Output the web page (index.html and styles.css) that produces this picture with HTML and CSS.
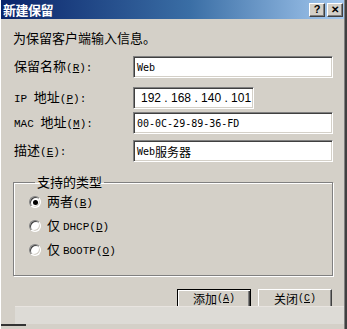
FILE: index.html
```html
<!DOCTYPE html>
<html lang="zh-CN">
<head>
    <meta charset="UTF-8">
    <title>新建保留</title>
    <link rel="stylesheet" href="styles.css">
</head>
<body>
    <div class="window">
        <div class="titlebar">
            <span class="title">新建保留</span>
            <div class="caption-buttons">
                <span class="cap-btn">?</span>
                <span class="cap-btn cap-close">&#x2715;</span>
            </div>
        </div>

        <div class="content">
            <p class="intro">为保留客户端输入信息。</p>

            <div class="form">
                <label class="field-label">保留名称<span class="a">(<u>R</u>):</span></label>
                <div class="input"><span class="mono">Web</span></div>

                <label class="field-label row-ip"><span class="a">IP </span>地址<span class="a">(<u>P</u>):</span></label>
                <div class="input input-ip row-ip"><span class="ip">192 . 168 . 140 . 101</span></div>

                <label class="field-label"><span class="a">MAC </span>地址<span class="a">(<u>M</u>):</span></label>
                <div class="input"><span class="mono">00-0C-29-89-36-FD</span></div>

                <label class="field-label">描述<span class="a">(<u>E</u>):</span></label>
                <div class="input"><span class="mono">Web</span>服务器</div>
            </div>

            <fieldset class="group">
                <legend>支持的类型</legend>
                <div class="option">
                    <span class="radio checked"></span>
                    <span>两者<span class="a">(<u>B</u>)</span></span>
                </div>
                <div class="option">
                    <span class="radio"></span>
                    <span>仅 <span class="a">DHCP(<u>D</u>)</span></span>
                </div>
                <div class="option">
                    <span class="radio"></span>
                    <span>仅 <span class="a">BOOTP(<u>O</u>)</span></span>
                </div>
            </fieldset>

            <div class="actions">
                <button class="btn btn-default">添加<span class="a">(<u>A</u>)</span></button>
                <button class="btn">关闭<span class="a">(<u>C</u>)</span></button>
            </div>
        </div>

        <div class="strip"></div>
        <div class="edge"></div>
    </div>
</body>
</html>
```

FILE: styles.css
```css
* {
    margin: 0;
    padding: 0;
    box-sizing: border-box;
}

body {
    width: 347px;
    height: 329px;
    overflow: hidden;
    background: #404040;
    font-family: 'Noto Sans CJK SC', sans-serif;
    font-size: 13px;
    color: #000;
}

.window {
    width: 345px;
    height: 329px;
    background: #d4d0c8;
    border-left: 1px solid #fff;
    border-right: 1px solid #808080;
    overflow: hidden;
}

.titlebar {
    height: 19px;
    display: flex;
    align-items: center;
    justify-content: space-between;
    padding: 0 1px 0 2px;
    background: linear-gradient(90deg, #0a246a 0%, #3a6ea5 55%, #a6caf0 100%);
}

.title {
    color: #fff;
    font-weight: 700;
    font-size: 13px;
    line-height: 19px;
    letter-spacing: -0.5px;
}

.caption-buttons {
    display: flex;
    gap: 2px;
}

.cap-btn {
    width: 16px;
    height: 14px;
    display: flex;
    align-items: center;
    justify-content: center;
    background: #d4d0c8;
    border: 1px solid;
    border-color: #fff #404040 #404040 #fff;
    box-shadow: inset -1px -1px #808080;
    font-family: 'Liberation Sans', sans-serif;
    font-weight: 700;
    font-size: 11px;
    line-height: 1;
}

.cap-close {
    font-size: 10px;
}

.content {
    padding: 0 12px 0 11px;
}

.intro {
    margin-top: 12px;
    line-height: 14px;
    padding-left: 1px;
}

.a {
    font-family: 'Liberation Mono', monospace;
    font-size: 11px;
}

.form {
    margin-top: 11px;
    display: grid;
    grid-template-columns: 121px 200px;
    grid-auto-rows: 22px;
    row-gap: 6px;
    align-items: center;
}

.field-label {
    padding-left: 2px;
    line-height: 14px;
}

.row-ip {
    margin-top: 4px;
    margin-bottom: -1px;
}

.input {
    height: 22px;
    display: flex;
    align-items: center;
    padding-left: 3px;
    background: #fff;
    border: 1px solid;
    border-color: #808080 #fff #fff #808080;
    box-shadow: inset 1px 1px #404040, inset -1px -1px #d4d0c8;
    font-size: 12px;
}

.input-ip {
    width: 121px;
    padding-left: 7px;
}

.mono {
    font-family: 'DejaVu Sans Mono', monospace;
    font-size: 10px;
}

.ip {
    font-family: 'Liberation Sans', sans-serif;
    font-size: 12px;
    white-space: pre;
}

.group {
    margin-top: 13px;
    margin-left: 1px;
    width: 320px;
    height: 101px;
    border: 1px solid #808080;
    box-shadow: inset 1px 1px #fff, 1px 1px #fff;
    padding: 6px 0 0 15px;
    display: flex;
    flex-direction: column;
    gap: 10px;
}

.group legend {
    margin-left: 6px;
    padding: 0 2px;
    line-height: 14px;
}

.option {
    display: flex;
    align-items: center;
    gap: 6px;
    height: 14px;
    line-height: 14px;
}

.radio {
    width: 12px;
    height: 12px;
    border-radius: 50%;
    background: #fff;
    border: 1px solid;
    border-color: #808080 #fff #fff #808080;
    box-shadow: inset 1px 1px #404040, inset -1px -1px #d4d0c8;
    display: flex;
    align-items: center;
    justify-content: center;
}

.radio.checked::after {
    content: '';
    width: 5px;
    height: 5px;
    border-radius: 50%;
    background: #000;
}

.actions {
    margin-top: 13px;
    height: 17px;
    overflow: hidden;
    display: flex;
    justify-content: flex-end;
    gap: 7px;
}

.btn {
    width: 74px;
    height: 23px;
    flex-shrink: 0;
    background: #d4d0c8;
    border: 1px solid;
    border-color: #fff #404040 #404040 #fff;
    box-shadow: inset -1px -1px #808080;
    font-family: 'Noto Sans CJK SC', sans-serif;
    font-size: 12px;
    line-height: 13px;
    padding-top: 2px;
    align-self: flex-start;
    display: flex;
    justify-content: center;
}

.btn .a {
    font-size: 10px;
}

.btn-default {
    border-color: #000;
    box-shadow: inset 1px 1px #fff, inset -1px -1px #404040, inset -2px -2px #808080;
}

.strip {
    margin-left: 14px;
    height: 18px;
    background: #dddbd6;
    border-top: 1px solid #e8e4e0;
}

.edge {
    width: 25px;
    height: 2px;
    background: #333;
}
```
